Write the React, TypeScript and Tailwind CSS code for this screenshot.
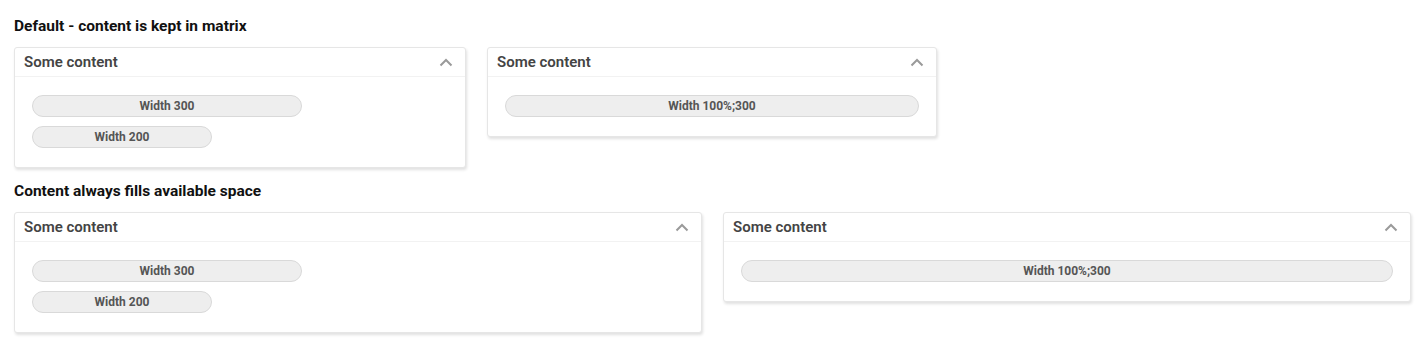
import React from "react";

type PanelProps = {
  width: string;
  children: React.ReactNode;
};

const Chevron = () => (
  <svg width="14" height="9" viewBox="0 0 14 9" fill="none" className="mr-[6px]">
    <path d="M1.5 7.5L7 2l5.5 5.5" stroke="#9a9a9a" strokeWidth="2" />
  </svg>
);

const Panel = ({ width, children }: PanelProps) => (
  <div
    className={`${width} bg-white border border-[#e6e6e6] rounded-[3px] shadow-[1px_2px_3px_rgba(0,0,0,0.12)]`}
  >
    <div className="h-[29px] flex items-center justify-between pl-[9px] pr-[6px] border-b border-[#f2f2f2]">
      <span className="text-[15px] font-semibold text-[#444]">Some content</span>
      <Chevron />
    </div>
    <div className="flex flex-col gap-[9px] pt-[18px] pb-[19px] px-[17px]">{children}</div>
  </div>
);

const Pill = ({ width, label }: { width: string; label: string }) => (
  <div
    className={`${width} h-[22px] rounded-full bg-[#eeeeee] border border-[#d9d9d9] flex items-center justify-center text-[12px] font-bold text-[#555]`}
  >
    {label}
  </div>
);

export default function App() {
  return (
    <div className="bg-white min-h-screen px-[14px] pt-[16px] font-['Roboto',sans-serif]">
      <h2 className="text-[15.5px] font-bold text-[#111] leading-[20px] mb-[11px]">
        Default - content is kept in matrix
      </h2>
      <div className="flex items-start gap-[21px]">
        <Panel width="w-[452px]">
          <Pill width="w-[270px]" label="Width 300" />
          <Pill width="w-[180px]" label="Width 200" />
        </Panel>
        <Panel width="w-[450px]">
          <Pill width="w-full" label="Width 100%;300" />
        </Panel>
      </div>
      <h2 className="text-[15.5px] font-bold text-[#111] leading-[20px] mt-[13px] mb-[11px]">
        Content always fills available space
      </h2>
      <div className="flex items-start gap-[21px] pr-[1px]">
        <Panel width="flex-1">
          <Pill width="w-[270px]" label="Width 300" />
          <Pill width="w-[180px]" label="Width 200" />
        </Panel>
        <Panel width="flex-1">
          <Pill width="w-full" label="Width 100%;300" />
        </Panel>
      </div>
    </div>
  );
}
